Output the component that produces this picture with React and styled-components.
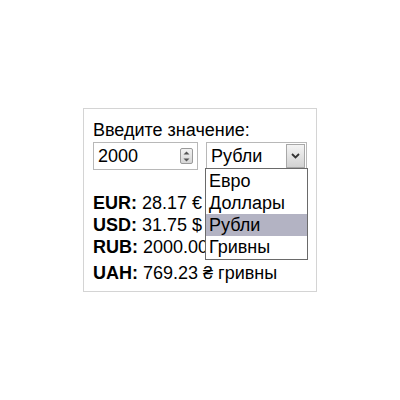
import React, { useState } from 'react'
import styled, { createGlobalStyle } from 'styled-components'

const GlobalStyle = createGlobalStyle`
  html, body {
    margin: 0;
    padding: 0;
    background: #fff;
  }
  body {
    font-family: "Liberation Sans", Arial, sans-serif;
    color: #000;
  }
`

const Page = styled.div`
  width: 400px;
  height: 400px;
  padding: 108px 0 0 83px;
  box-sizing: border-box;
`

const Box = styled.div`
  width: 234px;
  height: 184px;
  box-sizing: border-box;
  border: 1px solid #d4d4d4;
  padding: 12px 9px 0 9px;
`

const Label = styled.div`
  font-size: 18px;
  line-height: 19px;
  margin-bottom: 2px;
`

const Controls = styled.div`
  display: flex;
  gap: 8px;
`

const NumberField = styled.div`
  width: 105px;
  height: 28px;
  box-sizing: border-box;
  border: 1px solid #b8b8b8;
  display: flex;
  align-items: center;
  padding: 0 3px 0 4px;
  font-size: 18px;
`

const NumberText = styled.span`
  flex: 1;
`

const Spinner = styled.div`
  width: 13px;
  height: 16px;
  box-sizing: border-box;
  border: 1px solid #9a9a9a;
  border-radius: 2px;
  background: linear-gradient(#f2f2f2, #d6d6d6);
  display: flex;
  flex-direction: column;
  align-items: center;
  justify-content: space-around;
  margin-right: 1px;
`

const SelectWrap = styled.div`
  position: relative;
`

const SelectBox = styled.div`
  width: 101px;
  height: 28px;
  box-sizing: border-box;
  border: 1px solid #b8b8b8;
  display: flex;
  align-items: center;
  padding: 1px 1px 1px 4px;
  font-size: 18px;
`

const SelectText = styled.span`
  flex: 1;
`

const ArrowButton = styled.div`
  width: 19px;
  height: 24px;
  box-sizing: border-box;
  border: 1px solid #a8a8a8;
  background: linear-gradient(#f4f4f4, #d2d2d2);
  display: flex;
  align-items: center;
  justify-content: center;
`

const List = styled.div`
  position: absolute;
  left: -1px;
  top: 26px;
  width: 103px;
  box-sizing: border-box;
  border: 1px solid #6a6a6a;
  background: #fff;
  padding: 1px 0;
`

const Option = styled.div`
  height: 22px;
  line-height: 22px;
  font-size: 18px;
  padding-left: 3px;
  background: ${(p) => (p.$active ? '#b3b3c3' : '#fff')};
`

const Results = styled.div`
  margin-top: 22px;
`

const Row = styled.div`
  font-size: 18px;
  line-height: 22px;
  white-space: nowrap;
  margin-top: ${(p) => (p.$gap ? '4px' : '0')};
`

const Code = styled.b`
  font-weight: bold;
`

const options = ['Евро', 'Доллары', 'Рубли', 'Гривны']

const rows = [
  { code: 'EUR', value: '28.17 € евро' },
  { code: 'USD', value: '31.75 $ долларов' },
  { code: 'RUB', value: '2000.00 ₽ рублей' },
  { code: 'UAH', value: '769.23 ₴ гривны', gap: true }
]

const App = () => {
  const [selected] = useState('Рубли')

  return (
    <>
      <GlobalStyle />
      <Page>
        <Box>
          <Label>Введите значение:</Label>
          <Controls>
            <NumberField>
              <NumberText>2000</NumberText>
              <Spinner>
                <svg width="7" height="4" viewBox="0 0 7 4">
                  <path d="M0.5 3.5 L3.5 0.5 L6.5 3.5 Z" fill="#555" />
                </svg>
                <svg width="7" height="4" viewBox="0 0 7 4">
                  <path d="M0.5 0.5 L3.5 3.5 L6.5 0.5 Z" fill="#555" />
                </svg>
              </Spinner>
            </NumberField>
            <SelectWrap>
              <SelectBox>
                <SelectText>{selected}</SelectText>
                <ArrowButton>
                  <svg width="9" height="6" viewBox="0 0 9 6">
                    <path d="M1 1 L4.5 4.5 L8 1" fill="none" stroke="#333" strokeWidth="1.8" />
                  </svg>
                </ArrowButton>
              </SelectBox>
              <List>
                {options.map((o) => (
                  <Option key={o} $active={o === selected}>
                    {o}
                  </Option>
                ))}
              </List>
            </SelectWrap>
          </Controls>
          <Results>
            {rows.map((r) => (
              <Row key={r.code} $gap={r.gap}>
                <Code>{r.code}:</Code> {r.value}
              </Row>
            ))}
          </Results>
        </Box>
      </Page>
    </>
  )
}

export default App
